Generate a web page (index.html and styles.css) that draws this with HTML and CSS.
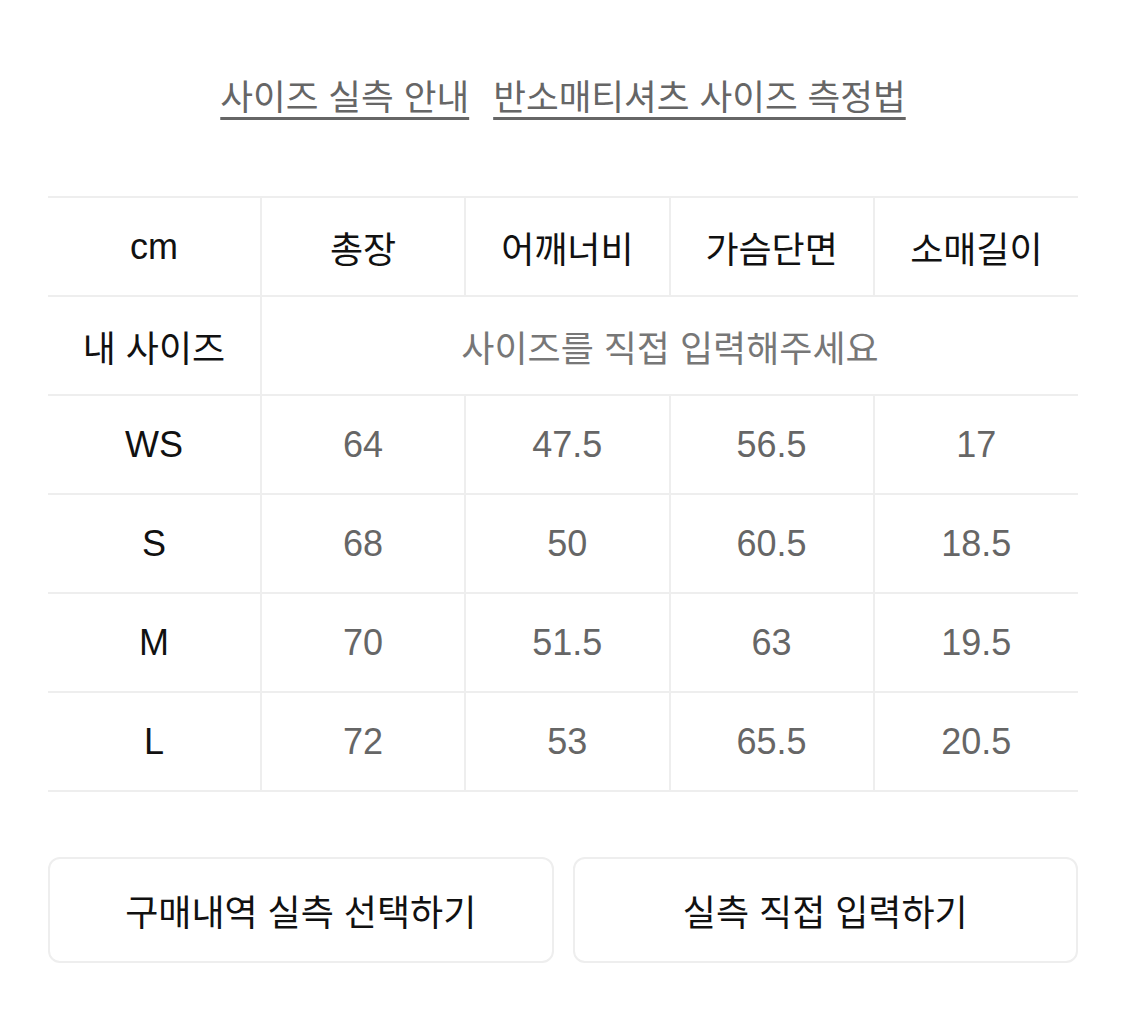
FILE: index.html
```html
<!DOCTYPE html>
<html lang="ko">
<head>
<meta charset="utf-8">
<link rel="stylesheet" href="styles.css">
</head>
<body>
<div class="page">
  <div class="links">
    <a class="link">사이즈 실측 안내</a>
    <a class="link">반소매티셔츠 사이즈 측정법</a>
  </div>
  <table class="size-table">
    <tr class="head">
      <td class="label">cm</td>
      <td>총장</td>
      <td>어깨너비</td>
      <td>가슴단면</td>
      <td>소매길이</td>
    </tr>
    <tr>
      <td class="label">내 사이즈</td>
      <td colspan="4" class="placeholder">사이즈를 직접 입력해주세요</td>
    </tr>
    <tr><td class="label">WS</td><td class="num">64</td><td class="num">47.5</td><td class="num">56.5</td><td class="num">17</td></tr>
    <tr><td class="label">S</td><td class="num">68</td><td class="num">50</td><td class="num">60.5</td><td class="num">18.5</td></tr>
    <tr><td class="label">M</td><td class="num">70</td><td class="num">51.5</td><td class="num">63</td><td class="num">19.5</td></tr>
    <tr><td class="label">L</td><td class="num">72</td><td class="num">53</td><td class="num">65.5</td><td class="num">20.5</td></tr>
  </table>
  <div class="buttons">
    <button class="btn">구매내역 실측 선택하기</button>
    <button class="btn">실측 직접 입력하기</button>
  </div>
</div>
</body>
</html>
```
FILE: styles.css
```css
html, body {
  margin: 0;
  padding: 0;
  background: #fff;
}
body {
  font-family: "Liberation Sans", "Noto Sans CJK KR", sans-serif;
  color: #111;
}
.page {
  padding: 0 47px 0 48px;
}
.links {
  display: flex;
  justify-content: center;
  gap: 24px;
  padding-top: 76px;
  height: 122px;
  box-sizing: border-box;
}
.link {
  font-family: "Liberation Sans", "Noto Sans CJK KR", sans-serif;
  font-size: 35.6px;
  line-height: 44px;
  color: #666;
  text-decoration: underline;
  text-decoration-thickness: 3px;
  text-underline-offset: 7px;
  text-decoration-color: #666;
}
.size-table {
  margin-top: 74px;
  width: 100%;
  border-collapse: collapse;
  table-layout: fixed;
}
.size-table td {
  border-top: 2px solid #eeeeee;
  border-bottom: 2px solid #eeeeee;
  border-left: 2px solid #eeeeee;
  height: 97px;
  padding: 0;
  text-align: center;
  font-family: "Liberation Sans", "Noto Sans CJK KR", sans-serif;
  font-size: 36px;
  color: #111;
}
.size-table td:first-child {
  border-left: none;
  width: 212px;
}
.size-table td.num {
  color: #666;
}
.size-table td.placeholder {
  color: #777;
}
.buttons {
  display: flex;
  gap: 19px;
  margin-top: 65px;
}
.btn {
  flex: 1;
  height: 106px;
  background: #fff;
  border: 2px solid #eeeeee;
  border-radius: 12px;
  font-family: "Liberation Sans", "Noto Sans CJK KR", sans-serif;
  font-size: 36px;
  color: #111;
  padding: 0;
}
```
